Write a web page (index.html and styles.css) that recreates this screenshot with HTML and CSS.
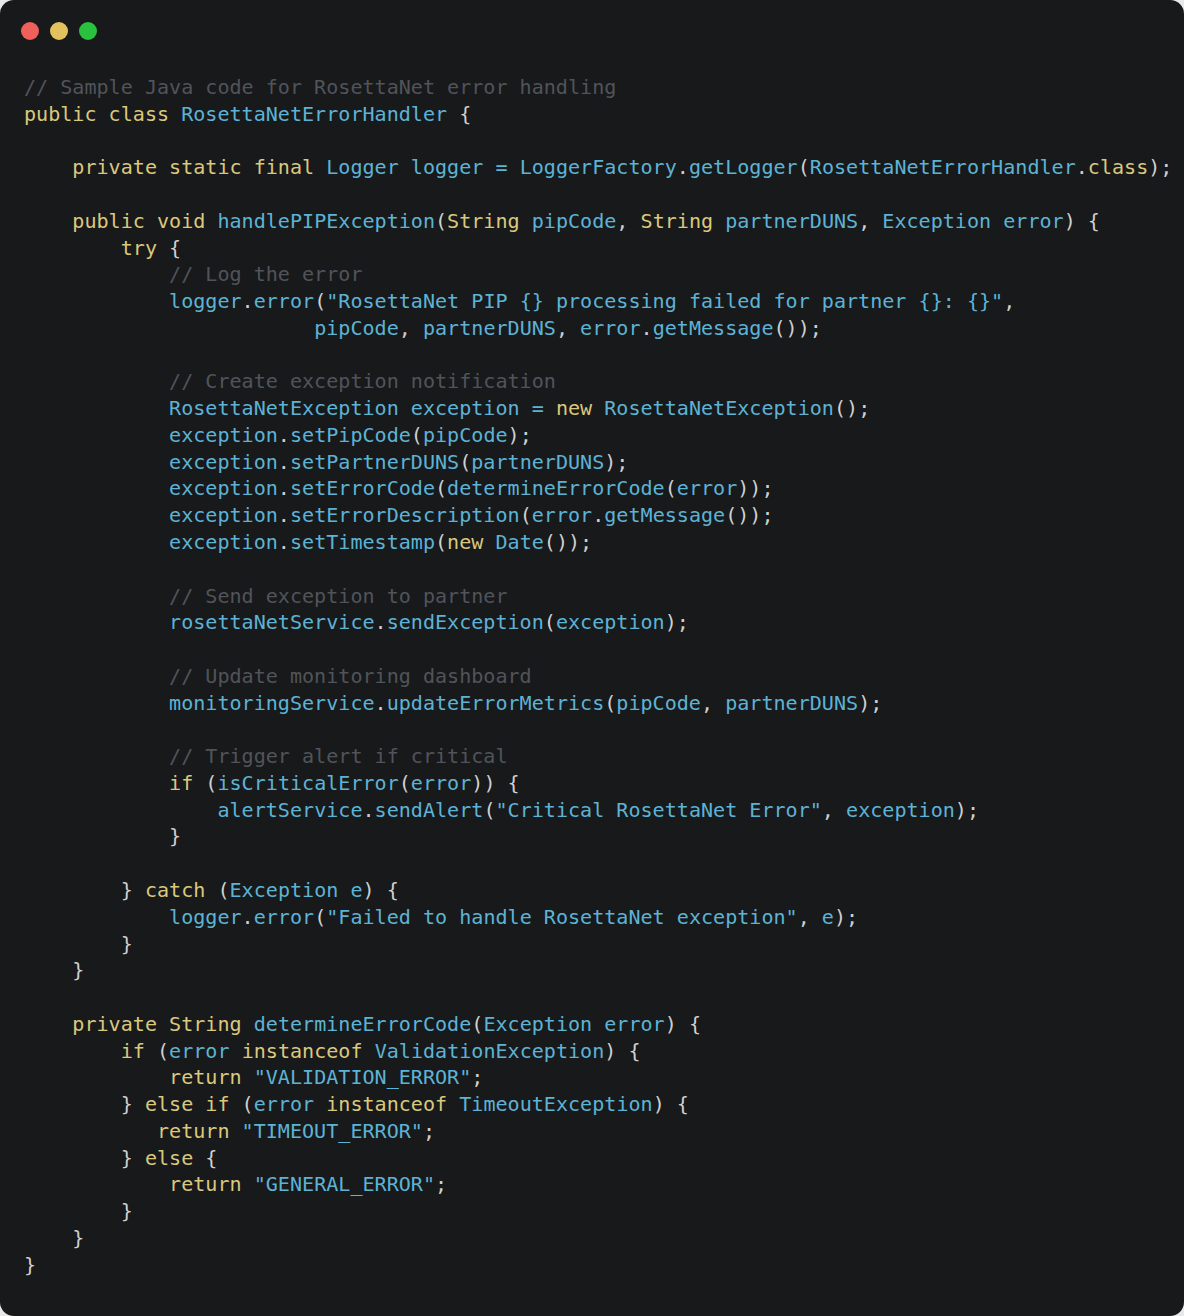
FILE: index.html
```html
<!DOCTYPE html>
<html lang="en">
<head>
<meta charset="utf-8">
<title>RosettaNetErrorHandler.java</title>
<link rel="stylesheet" href="styles.css">
</head>
<body>
<div class="window">
  <div class="titlebar">
    <span class="dot red"></span>
    <span class="dot yellow"></span>
    <span class="dot green"></span>
  </div>
<pre class="code"><span class="c">// Sample Java code for RosettaNet error handling</span>
<span class="k">public class</span> <span class="i">RosettaNetErrorHandler</span> {

    <span class="k">private static final</span> <span class="i">Logger logger</span> <span class="i">=</span> <span class="i">LoggerFactory</span>.<span class="i">getLogger</span>(<span class="i">RosettaNetErrorHandler</span>.<span class="k">class</span>);

    <span class="k">public void</span> <span class="i">handlePIPException</span>(<span class="k">String</span> <span class="i">pipCode</span>, <span class="k">String</span> <span class="i">partnerDUNS</span>, <span class="i">Exception error</span>) {
        <span class="k">try</span> {
            <span class="c">// Log the error</span>
            <span class="i">logger</span>.<span class="i">error</span>(<span class="i">"RosettaNet PIP {} processing failed for partner {}: {}"</span>,
                        <span class="i">pipCode</span>, <span class="i">partnerDUNS</span>, <span class="i">error</span>.<span class="i">getMessage</span>());

            <span class="c">// Create exception notification</span>
            <span class="i">RosettaNetException exception</span> <span class="i">=</span> <span class="k">new</span> <span class="i">RosettaNetException</span>();
            <span class="i">exception</span>.<span class="i">setPipCode</span>(<span class="i">pipCode</span>);
            <span class="i">exception</span>.<span class="i">setPartnerDUNS</span>(<span class="i">partnerDUNS</span>);
            <span class="i">exception</span>.<span class="i">setErrorCode</span>(<span class="i">determineErrorCode</span>(<span class="i">error</span>));
            <span class="i">exception</span>.<span class="i">setErrorDescription</span>(<span class="i">error</span>.<span class="i">getMessage</span>());
            <span class="i">exception</span>.<span class="i">setTimestamp</span>(<span class="k">new</span> <span class="i">Date</span>());

            <span class="c">// Send exception to partner</span>
            <span class="i">rosettaNetService</span>.<span class="i">sendException</span>(<span class="i">exception</span>);

            <span class="c">// Update monitoring dashboard</span>
            <span class="i">monitoringService</span>.<span class="i">updateErrorMetrics</span>(<span class="i">pipCode</span>, <span class="i">partnerDUNS</span>);

            <span class="c">// Trigger alert if critical</span>
            <span class="k">if</span> (<span class="i">isCriticalError</span>(<span class="i">error</span>)) {
                <span class="i">alertService</span>.<span class="i">sendAlert</span>(<span class="i">"Critical RosettaNet Error"</span>, <span class="i">exception</span>);
            }

        } <span class="k">catch</span> (<span class="i">Exception e</span>) {
            <span class="i">logger</span>.<span class="i">error</span>(<span class="i">"Failed to handle RosettaNet exception"</span>, <span class="i">e</span>);
        }
    }

    <span class="k">private</span> <span class="k">String</span> <span class="i">determineErrorCode</span>(<span class="i">Exception error</span>) {
        <span class="k">if</span> (<span class="i">error</span> <span class="k">instanceof</span> <span class="i">ValidationException</span>) {
            <span class="k">return</span> <span class="i">"VALIDATION_ERROR"</span>;
        } <span class="k">else if</span> (<span class="i">error</span> <span class="k">instanceof</span> <span class="i">TimeoutException</span>) {
           <span class="k">return</span> <span class="i">"TIMEOUT_ERROR"</span>;
        } <span class="k">else</span> {
            <span class="k">return</span> <span class="i">"GENERAL_ERROR"</span>;
        }
    }
}</pre>
</div>
</body>
</html>
```
FILE: styles.css
```css
html, body {
  margin: 0;
  padding: 0;
  background: #e9e9e9;
}

.window {
  width: 1184px;
  height: 1316px;
  box-sizing: border-box;
  background: #18191b;
  border-radius: 14px;
  padding: 22px 0 0 24px;
  overflow: hidden;
}

.titlebar {
  display: flex;
  gap: 11px;
  margin-left: -3px;
  height: 18px;
}

.dot {
  width: 18px;
  height: 18px;
  border-radius: 50%;
  display: block;
}

.red { background: #f0605a; }
.yellow { background: #e3c25e; }
.green { background: #29c23f; }

.code {
  margin: 34px 0 0 0;
  font-family: "DejaVu Sans Mono", monospace;
  font-size: 20.08px;
  line-height: 26.77px;
  color: #d0d0d0;
  white-space: pre;
}

.k { color: #dbc87c; }
.i { color: #5db3d5; }
.c { color: #50545a; }
```
